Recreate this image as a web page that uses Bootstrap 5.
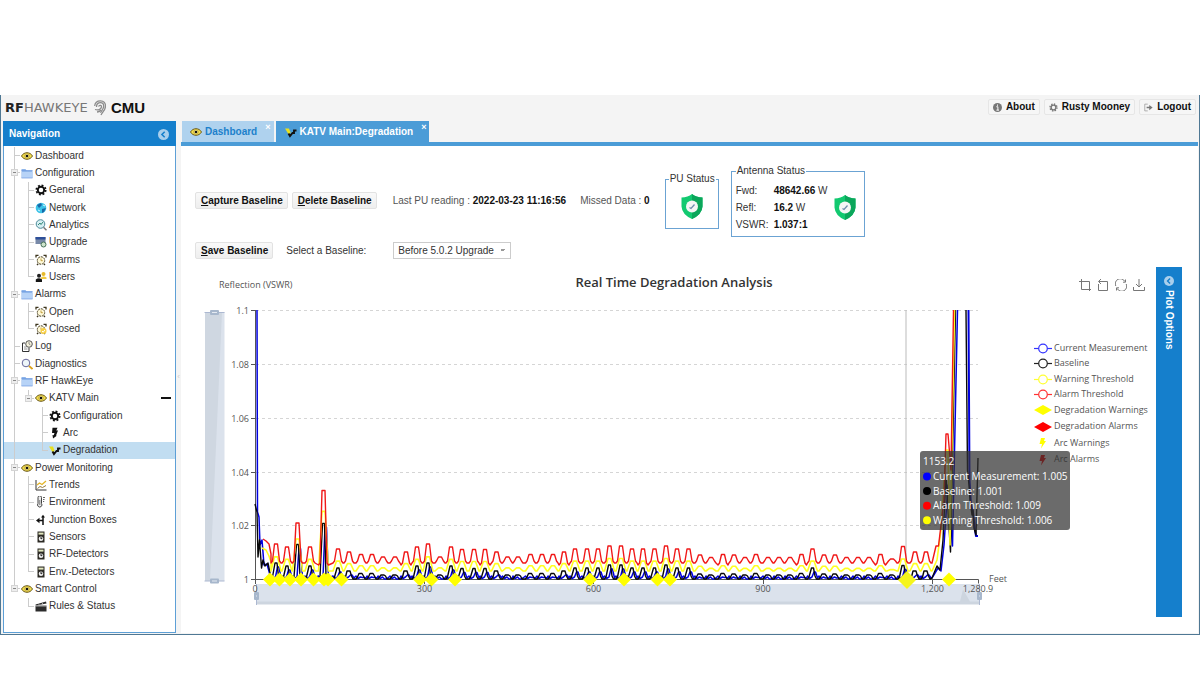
<!DOCTYPE html>
<html lang="en">
<head>
<meta charset="utf-8">
<meta name="viewport" content="width=device-width, initial-scale=1">
<title>RFHawkeye CMU</title>
<link href="https://cdn.jsdelivr.net/npm/bootstrap@5.3.0/dist/css/bootstrap.min.css" rel="stylesheet">
<style>
  body { font: 10px/16px "Liberation Sans", Arial, sans-serif; color: #333; background: #fff; padding: 95px 0 39px; }
  a { text-decoration: none; color: inherit; }
  .frame { border: 1px solid #4f7894; border-top: 0; background: #f4f4f4; padding: 0 1px 1px 2px; }
  .topbar { height: 26px; padding: 0 2px; }
  .logo-word { font: 13px/26px "DejaVu Sans", sans-serif; color: #777; width: 89px; }
  .logo-word b { color: #222; }
  .swirl { margin-right: 5px; }
  .product { font-size: 15px; color: #111; }
  .tool { display: flex; align-items: center; border: 1px solid #e6e6e6; background: #f6f6f6; color: #111; font-weight: bold; font-size: 10px; line-height: 14px; border-radius: 2px; padding: 0 4px; gap: 4px; }
  .tool svg { width: 9px; height: 9px; }

  .sidebar { width: 173px; flex: none; background: #fff; border: 1px solid #5d9fd6; }
  .sidebar-head { background: #157fcc; color: #fff; height: 25px; margin: -1px -1px 0; padding: 0 8px 0 6px; }
  .round-btn { width: 10px; height: 10px; border: 0; padding: 0; background: none; display: block; }
  .round-btn svg { display: block; }
  .tree { display: grid; grid-auto-rows: 1fr; min-height: 468px; margin: 1px 0 17px; }
  .node { display: flex; align-items: center; height: 100%; padding-left: 3px; color: #333; line-height: 12px; }
  .node.active { background: #c1ddf1; }
  .node svg { width: 12px; height: 12px; margin-right: 2px; flex: none; }
  .g { width: 14px; align-self: stretch; flex: none;
       --v: linear-gradient(#ccc,#ccc) 7px 0/1px 100% no-repeat;
       --h: linear-gradient(#ccc,#ccc) 7px 50%/6px 1px no-repeat; }
  .g.v { background: var(--v); }
  .g.t, .g.x { background: var(--v), var(--h); }
  .g.l, .g.y { background: linear-gradient(#ccc,#ccc) 7px 0/1px 50% no-repeat, var(--h); }
  .g.x, .g.y { display: flex; align-items: center; }
  .g.x::before, .g.y::before { content: ""; width: 7px; height: 7px; margin-left: 4px; border: 1px solid #d4d4d4; background: linear-gradient(#888,#888) 50% 50%/3px 1px no-repeat #eee; }
  .dash { width: 10px; height: 2px; background: #111; margin-right: 4px; }

  .splitter { width: 5px; flex: none; color: #ccc; font-size: 8px; }
  .doc-tabs { height: 25px; border-bottom: 4px solid #4b9cd7; gap: 2px; }
  .doc-tab { background: #afd2ee; color: #1c80cb; font-weight: bold; padding: 0 3px 0 8px; height: 21px; margin-left: 1px; line-height: 21px; }
  .doc-tab + .doc-tab { background: #4b9cd7; color: #fff; margin-left: 0; padding-left: 9px; }
  .doc-tab svg { width: 12px; height: 12px; margin-right: 3px; }
  .tab-close { border: 0; background: none; color: #fff; font: bold 9px/9px "Liberation Sans", sans-serif; padding: 2px 0 0; align-self: flex-start; }
  .pane { background: #fff; }

  .form-area { padding: 23px 14px 0; }
  .push-btn { border: 1px solid #e2e2e2; background: linear-gradient(#f9f9f9,#eee); color: #111; font-weight: bold; font-size: 10px; line-height: 15px; padding: 0 4px 0 5px; border-radius: 2px; }
  .line-a { height: 67px; }
  .line-a .read { margin-left: 14px; color: #555; }
  .line-b { margin: 6px 0 8px; height: 17px; }
  .line-b label { width: 107px; margin-left: 13px; }
  .status { border: 1px solid #6ba3d3; padding: 0 4px; color: #333; flex: none; }
  .status legend { float: none; width: auto; font-size: 10px; line-height: 14px; margin: 0; padding: 0 1px; color: #333; white-space: nowrap; }
  .pu { width: 54px; height: 57px; margin: 3px 12px 0 15px; padding: 0 3px; }
  .ant { width: 134px; height: 73px; margin-top: -5px; }
  .ant dl { display: grid; grid-template-columns: 38px auto; grid-auto-rows: 17px; line-height: 17px; margin: 4px 0 0; }
  .ant dt { font-weight: normal; }
  .ant dd { margin: 0; }
  .ant dd b, .read b { color: #111; }
  .baseline-select { appearance: none; width: 118px; height: 17px; border: 1px solid #ccc; border-radius: 0; padding: 0 4px; font-size: 10px; color: #333;
     background: linear-gradient(45deg,transparent 50%,#999 50%) 106px 6px/3px 3px no-repeat, linear-gradient(-45deg,transparent 50%,#999 50%) 109px 6px/3px 3px no-repeat, #fff; }
  .chart-area { min-width: 0; }
  #chart { display: block; width: 100%; font-family: "Open Sans", sans-serif; }
  .toolbox { position: absolute; right: 6px; top: 12px; gap: 6px; }
  .toolbox button { border: 0; background: none; padding: 0; line-height: 0; }
  .options { width: 26px; flex: none; background: #157fcc; margin: 0 16px 0 5px; padding-top: 9px; }
  .options span { writing-mode: vertical-rl; color: #fff; font-weight: bold; line-height: 12px; }
</style>
</head>
<body>
<svg width="0" height="0" class="position-absolute" aria-hidden="true">
  <symbol id="eye" viewBox="0 0 12 12"><path d="M.5 6C3 1.600 9 1.600 11.500 6 9 10.400 3 10.400.5 6z" fill="#f5e04e" stroke="#6b5a1d"/><circle cx="6" cy="6" r="2.300" fill="#fff08a" stroke="#a58a20" stroke-width=".6"/><circle cx="6" cy="6" r="1.300" fill="#111"/></symbol>
  <symbol id="folder" viewBox="0 0 12 12"><path d="M.5 2h4l1 1.500h6V11H.5z" fill="#8fb6ea"/><path d="M1 5h10.500v6H1z" fill="#b7d3f7"/><path d="M.5 3.500h11M.5 11h11" stroke="#6d9ae0" stroke-width=".7"/></symbol>
  <symbol id="gear" viewBox="0 0 12 12"><circle cx="6" cy="6" r="3.200" fill="none" stroke="currentColor" stroke-width="1.900"/><circle cx="6" cy="6" r="4.700" fill="none" stroke="currentColor" stroke-width="1.700" stroke-dasharray="1.900 1.790"/></symbol>
  <symbol id="globe" viewBox="0 0 12 12"><circle cx="6" cy="6" r="5.300" fill="#3cc3e8"/><path d="M2 3l4-2 1 2-3 3zM7 7l4-1-2 4-2 1z" fill="#1868a8"/><path d="M3 8l2 1M8 3l2 1" stroke="#d8f6ff"/></symbol>
  <symbol id="mag" viewBox="0 0 12 12"><circle cx="5" cy="5" r="3.800" fill="#eef6fa" stroke="#669"/><path d="M8 8l3.500 3" stroke="#dba21c" stroke-width="1.800"/></symbol>
  <symbol id="ana" viewBox="0 0 12 12"><circle cx="5.500" cy="5" r="4.300" fill="#d6eef2" stroke="#4d8a99"/><path d="M3 6l2-2 1 1.500L8 3" fill="none" stroke="#387"/><path d="M8.500 8.200l3 3" stroke="#777" stroke-width="1.500"/></symbol>
  <symbol id="upg" viewBox="0 0 12 12"><path d="M.5 1h10v7H.5z" fill="#7889a8"/><path d="M.5 1h10v2.500H.5z" fill="#2d4f99"/><circle cx="8.500" cy="8.500" r="2.500" fill="#cfe4cc" stroke="#48735a"/></symbol>
  <symbol id="alarm" viewBox="0 0 12 12"><circle cx="6" cy="6.500" r="3.700" fill="#fff9d8" stroke="#443a1d" stroke-dasharray="2 .8"/><path d="M6 4.500v2.200h1.800" fill="none" stroke="#b48a20" stroke-width=".8"/><path d="M1 3.500V1.300h2.500M8.500 1.300H11v2.200M2 11l1.200-1.200M10 11L8.800 9.800" fill="none" stroke="#3c341c" stroke-width="1.300"/></symbol>
  <symbol id="alarmc" viewBox="0 0 12 12"><use href="#alarm"/><circle cx="8.500" cy="8" r="3" fill="#f8cf45"/><path d="M7 8l1.200 1.200L10 7" fill="none" stroke="#fff"/></symbol>
  <symbol id="users" viewBox="0 0 12 12"><circle cx="8.500" cy="3" r="2" fill="#e7ba2b"/><path d="M6 10V6.500q2.500-2 5.500 0V8H7z" fill="#f2cb40"/><circle cx="4" cy="4.800" r="2" fill="#222"/><path d="M.8 11V8.500q3-2.500 6.200 0V11z" fill="#151515"/></symbol>
  <symbol id="logi" viewBox="0 0 12 12"><path d="M4 3H1.500v8.500H8V8" fill="none" stroke="#333"/><circle cx="8" cy="4" r="3.300" fill="#f4f1dc" stroke="#555"/><path d="M8 2v2l1.500 1M3 7h2.500M3 9h3.500" fill="none" stroke="#777" stroke-width=".8"/></symbol>
  <symbol id="bolt" viewBox="0 0 12 12"><path d="M3.500.7h5L7.300 3.500H9l-2 5 .8.3L4 11.500 3.500 8l1.200.3L5.500 6H3z" fill="currentColor"/></symbol>
  <symbol id="degr" viewBox="0 0 12 12"><path d="M0 2.500h4l1.500 4L4 9z" fill="#e8e020"/><path d="M3.500 7.500L5 10l2.500-3H9V4.500h2.500" fill="none" stroke="#111" stroke-width="1.900"/></symbol>
  <symbol id="trend" viewBox="0 0 12 12"><path d="M1 1v10h10.500" fill="none" stroke="#333"/><path d="M2 6l2.500-2L7 5.500 11 2" fill="none" stroke="#e3b528" stroke-width="1.300"/><path d="M2.500 9.500L5 7.500l2.500 1 3.500-2" fill="none" stroke="#977b3a"/></symbol>
  <symbol id="therm" viewBox="0 0 12 12"><path d="M3 1.500v6a2.200 2.200 0 1 0 3.500 0v-6a1.700 1.700 0 0 0-3.500 0z" fill="#eee" stroke="#444"/><path d="M4.800 4v5" stroke="#777"/><path d="M8 1.500h2M8 3.500h1.500M8 5.500h1.200" stroke="#666"/></symbol>
  <symbol id="junc" viewBox="0 0 12 12"><path d="M8 11V2M8 6.500H3" stroke="#111" stroke-width="1.500"/><path d="M6 3.500L8 .8l2 2.700zM4.500 3.800v5.400L1 6.500z" fill="#111"/></symbol>
  <symbol id="sens" viewBox="0 0 12 12"><path d="M2.500.5h7v11h-7z" fill="#2c2a24"/><path d="M3.500 1.600h5v2h-5z" fill="#e3e8c0"/><circle cx="6" cy="7.800" r="2.300" fill="#f1f1f1"/><path d="M6 6v2l1.500-1" stroke="#222" fill="none"/></symbol>
  <symbol id="clap" viewBox="0 0 12 12"><path d="M.5 5.500h11v6H.5z" fill="#2b2b2b"/><path d="M.5 4.600L11 1.500l.5 2L1 5.500z" fill="#2b2b2b"/><path d="M3 3.500l1.500 1.300M6.500 2.600L8 4M.5 6h11" stroke="#ddd" stroke-width=".7"/></symbol>
  <symbol id="left" viewBox="0 0 12 12"><circle cx="6" cy="6" r="6" fill="#a9cfec"/><path d="M7.300 3L4.300 6l3 3" fill="none" stroke="#157fcc" stroke-width="1.700"/></symbol>
  <symbol id="shield" viewBox="0 0 22 25"><path d="M11 0q4 3.300 10.500 3.500v9Q21 20.500 11 25 1 20.500.5 12.500v-9Q7 3.300 11 0z" fill="#12c970"/><path d="M11 0q4 3.300 10.500 3.500v9Q21 20.500 11 25z" fill="#0ba65b"/><circle cx="11" cy="12.500" r="6" fill="#f4f6f5"/><path d="M8.500 13.500l1.500 1 3.500-4" fill="none" stroke="#6c8bac" stroke-width="1.300"/></symbol>
</svg>

<div class="frame">
  <header class="topbar d-flex align-items-center">
    <span class="logo-word"><b>RF</b>HAWKEYE</span>
    <svg width="12" height="16" viewBox="0 0 12 16" class="swirl" aria-hidden="true"><g fill="none" stroke="#8b8b8b" stroke-width="1.300"><path d="M.7 6C1 2 4 .8 6.500.8c3.500 0 5 2.700 5 5.200 0 4-3 6-4.500 9"/><path d="M2.500 7c0-3 2-4.300 4-4.300s3.200 1.600 3.200 3.500c0 3-2.200 4-3.200 6.500"/><path d="M1 9.500c3 1 6 0 6.500-2.500.3-1.500-2-2.500-3-.5"/><path d="M3 12c1.500 0 3-.8 4-2"/></g></svg>
    <strong class="product">CMU</strong>
    <nav class="ms-auto d-flex gap-1 align-self-start pt-1">
      <button type="button" class="tool"><svg viewBox="0 0 12 12"><circle cx="6" cy="6" r="6" fill="#777"/><path d="M4.500 5h2v4.500M4.500 9.500h3.500M6 2v1.700" fill="none" stroke="#fff" stroke-width="1.300"/></svg>About</button>
      <button type="button" class="tool"><svg color="#777"><use href="#gear"/></svg>Rusty Mooney</button>
      <button type="button" class="tool"><svg viewBox="0 0 12 12"><path d="M5 1.500H1v9h4" fill="none" stroke="#999"/><path d="M3.500 6H8" stroke="#777" stroke-width="2"/><path d="M7 2.500L11.500 6 7 9.500z" fill="#777"/></svg>Logout</button>
    </nav>
  </header>

  <div class="d-flex">
    <aside class="sidebar">
      <div class="sidebar-head d-flex align-items-center justify-content-between"><b>Navigation</b>
        <button type="button" class="round-btn" aria-label="Collapse navigation"><svg width="11" height="11"><use href="#left"/></svg></button></div>
      <ul class="tree list-unstyled">
        <li><a href="#" class="node"><i class="g t"></i><svg><use href="#eye"/></svg>Dashboard</a></li>
        <li><a href="#" class="node"><i class="g x"></i><svg><use href="#folder"/></svg>Configuration</a></li>
        <li><a href="#" class="node"><i class="g v"></i><i class="g t"></i><svg color="#111"><use href="#gear"/></svg>General</a></li>
        <li><a href="#" class="node"><i class="g v"></i><i class="g t"></i><svg><use href="#globe"/></svg>Network</a></li>
        <li><a href="#" class="node"><i class="g v"></i><i class="g t"></i><svg><use href="#ana"/></svg>Analytics</a></li>
        <li><a href="#" class="node"><i class="g v"></i><i class="g t"></i><svg><use href="#upg"/></svg>Upgrade</a></li>
        <li><a href="#" class="node"><i class="g v"></i><i class="g t"></i><svg><use href="#alarm"/></svg>Alarms</a></li>
        <li><a href="#" class="node"><i class="g v"></i><i class="g l"></i><svg><use href="#users"/></svg>Users</a></li>
        <li><a href="#" class="node"><i class="g x"></i><svg><use href="#folder"/></svg>Alarms</a></li>
        <li><a href="#" class="node"><i class="g v"></i><i class="g t"></i><svg><use href="#alarm"/></svg>Open</a></li>
        <li><a href="#" class="node"><i class="g v"></i><i class="g l"></i><svg><use href="#alarmc"/></svg>Closed</a></li>
        <li><a href="#" class="node"><i class="g t"></i><svg><use href="#logi"/></svg>Log</a></li>
        <li><a href="#" class="node"><i class="g t"></i><svg><use href="#mag"/></svg>Diagnostics</a></li>
        <li><a href="#" class="node"><i class="g x"></i><svg><use href="#folder"/></svg>RF HawkEye</a></li>
        <li><a href="#" class="node"><i class="g v"></i><i class="g y"></i><svg><use href="#eye"/></svg>KATV Main<span class="dash ms-auto"></span></a></li>
        <li><a href="#" class="node"><i class="g v"></i><i class="g"></i><i class="g t"></i><svg color="#111"><use href="#gear"/></svg>Configuration</a></li>
        <li><a href="#" class="node"><i class="g v"></i><i class="g"></i><i class="g t"></i><svg color="#111"><use href="#bolt"/></svg>Arc</a></li>
        <li><a href="#" class="node active"><i class="g v"></i><i class="g"></i><i class="g l"></i><svg><use href="#degr"/></svg>Degradation</a></li>
        <li><a href="#" class="node"><i class="g x"></i><svg><use href="#eye"/></svg>Power Monitoring</a></li>
        <li><a href="#" class="node"><i class="g v"></i><i class="g t"></i><svg><use href="#trend"/></svg>Trends</a></li>
        <li><a href="#" class="node"><i class="g v"></i><i class="g t"></i><svg><use href="#therm"/></svg>Environment</a></li>
        <li><a href="#" class="node"><i class="g v"></i><i class="g t"></i><svg><use href="#junc"/></svg>Junction Boxes</a></li>
        <li><a href="#" class="node"><i class="g v"></i><i class="g t"></i><svg><use href="#sens"/></svg>Sensors</a></li>
        <li><a href="#" class="node"><i class="g v"></i><i class="g t"></i><svg><use href="#sens"/></svg>RF-Detectors</a></li>
        <li><a href="#" class="node"><i class="g v"></i><i class="g l"></i><svg><use href="#sens"/></svg>Env.-Detectors</a></li>
        <li><a href="#" class="node"><i class="g y"></i><svg><use href="#eye"/></svg>Smart Control</a></li>
        <li><a href="#" class="node"><i class="g"></i><i class="g l"></i><svg><use href="#clap"/></svg>Rules &amp; Status</a></li>
      </ul>
    </aside>
    <div class="splitter d-flex align-items-center justify-content-center">‹</div>

    <main class="flex-grow-1 d-flex flex-column chart-area">
      <div class="doc-tabs d-flex">
        <div class="doc-tab d-flex align-items-center"><svg><use href="#eye"/></svg><a href="#">Dashboard</a><button type="button" class="tab-close ms-2" aria-label="Close Dashboard">×</button></div>
        <div class="doc-tab d-flex align-items-center"><svg><use href="#degr"/></svg><a href="#">KATV Main:Degradation</a><button type="button" class="tab-close ms-2" aria-label="Close Degradation">×</button></div>
      </div>
      <div class="pane flex-grow-1">
        <form class="form-area">
          <div class="line-a d-flex">
            <div class="d-flex align-items-center flex-shrink-0 pb-1">
              <button type="button" class="push-btn"><u>C</u>apture Baseline</button>
              <button type="button" class="push-btn ms-1"><u>D</u>elete Baseline</button>
              <span class="read ms-3">Last PU reading : <b>2022-03-23 11:16:56</b></span>
              <span class="read">Missed Data : <b>0</b></span>
            </div>
            <fieldset class="status pu align-self-start"><legend>PU Status</legend>
              <svg width="22" height="25" class="d-block mx-auto mt-2"><use href="#shield"/></svg></fieldset>
            <fieldset class="status ant"><legend>Antenna Status</legend>
              <div class="d-flex"><dl><dt>Fwd:</dt><dd><b>48642.66</b> W</dd><dt>Refl:</dt><dd><b>16.2</b> W</dd><dt>VSWR:</dt><dd><b>1.037:1</b></dd></dl>
              <svg width="22" height="25" class="ms-auto align-self-center me-1 mt-1"><use href="#shield"/></svg></div></fieldset>
          </div>
          <div class="line-b d-flex align-items-center">
            <button type="button" class="push-btn"><u>S</u>ave Baseline</button>
            <label for="baseline">Select a Baseline:</label>
            <select id="baseline" class="baseline-select"><option>Before 5.0.2 Upgrade</option></select>
          </div>
        </form>
        <div class="d-flex">
          <div class="chart-area flex-grow-1 position-relative">
            <svg id="chart" viewBox="181 267 970 350" role="img" aria-label="Real Time Degradation Analysis"></svg>
            <div class="toolbox d-flex">
              <button type="button" aria-label="Zoom"><svg width="12" height="12" fill="none" stroke="#777"><path d="M2.500 0v10.500H12M0 2.500h10.500V12"/></svg></button>
              <button type="button" aria-label="Zoom reset"><svg width="12" height="12" fill="none" stroke="#777"><path d="M1.500 5v6.500h9v-9H2M4 0L1.500 2.500 4 5"/></svg></button>
              <button type="button" aria-label="Restore"><svg width="12" height="12" fill="none" stroke="#777"><path d="M.8 7a5 5 0 0 1 9-4.500M11.200 5a5 5 0 0 1-9 4.500M10.500.5v2.700H8M1.500 11.500V8.800H4"/></svg></button>
              <button type="button" aria-label="Save as image"><svg width="12" height="12" fill="none" stroke="#777"><path d="M6 0v8M3 5l3 3 3-3M.5 8v3.500h11V8"/></svg></button>
            </div>
          </div>
          <div class="options d-flex flex-column align-items-center">
            <button type="button" class="round-btn mb-1" aria-label="Expand plot options"><svg width="10" height="10"><use href="#left"/></svg></button>
            <span>Plot Options</span>
          </div>
        </div>
      </div>
    </main>
  </div>
</div>

<script src="https://cdn.jsdelivr.net/npm/bootstrap@5.3.0/dist/js/bootstrap.bundle.min.js"></script>
<script>
// Position of the crest of every ripple and the height of its alarm threshold.
const peaks = [[276,544],[287,547],[297.5,523],[310,547],[323.5,490.5],[338,549],[349,552],[361,554.5],[372,554.5],[383,557],[395,557],[406,552],[417,547],[428,544],[440,557],[451,547],[462,549.5],[474,549.5],[485,549.5],[496.5,552],[507.5,557],[518,557],[530.5,554.5],[542,554.5],[553,554.5],[564,552],[575,549],[587,549],[598,549],[609.5,546],[621,546],[632,549],[643,549],[654.5,549],[666,546],[677,549],[688.5,549],[700,555],[711,557.5],[723,554.5],[734,555],[745,557.5],[756,554.5],[768,557.5],[779,557.5],[790,557.5],[801.5,554.5],[812.5,549],[824,555],[835,555],[846.5,557.5],[858,557.5],[869,557.5],[880.5,554.5],[892,559],[903,546.5],[915,552],[926,552]];
const alarm = [[263,539],[266,541],[269,544],[271,554]], warn = [[262,548],[266,550],[269,556],[271,562]];
const base = [[255,504],[257,512],[258,557],[259.5,540],[261.5,568],[263,560],[265,566],[268,563],[270,573]];
const cur = [[257,310],[257.5,512],[259,517],[260,545],[262,540],[264,565],[267,564],[270,575]];
peaks.forEach(([x,y], i) => {
  const low = 563 + (i % 7 === 4 ? 2 : 0), wy = y + (563 - y) * .15 + 9;
  const by = Math.min(575, y + 19 + Math.max(0, (530 - y) * .35)), wide = y > 551 ? 1 : 0;
  alarm.push([x-5,low],[x-3.5,low-2],[x-1.5,y],[x+1.5,y],[x+3.5,low-2],[x+5,low]);
  warn.push([x-5,571],[x-1.5,wy+1],[x+1.5,wy+1],[x+5,571]);
  base.push([x-5,579],[x-3.5,577],[x-1-wide,by],[x+1,by],[x+2.5,576],[x+4,579]);
  cur.push([x-5,576],[x-3,578.5],[x-.5,577],[x+1.5,by+4],[x+3,by+4],[x+5,578]);
});
alarm.push([932,563],[936,546],[938.5,546],[944,500],[946,434],[948,434],[951,470],[953.5,310]);
warn.push([932,571],[937,560],[941,530],[946,450],[948,450],[950,545],[954.5,310]);
base.push([932,578],[937,566],[940,570],[943,540],[946,475],[950.5,552],[955.5,310]);
cur.push([932,578],[938,568],[941,571],[944,545],[948,485],[952.5,546],[957.5,310]);
const baseTail = [[966,310],[967.5,470],[969,485],[970,500],[972,515],[973,510],[974,528],[976,535],[978,458]];
const curTail = [[968.5,310],[969.5,480],[971,505],[973,512],[975,530],[976,536],[978,536]];
const line = (p, c, w = 1.4) => `<polyline points="${p.map(q => q.join()).join(' ')}" fill="none" stroke="${c}" stroke-width="${w}" stroke-linejoin="round"/>`;
const text = (x, y, s, size = 9, fill = '#555', extra = '') => `<text x="${x}" y="${y}" font-size="${size}" fill="${fill}" ${extra}>${s}</text>`;
const diamond = (x, y, w, h, c) => `<path d="M${x-w} ${y}L${x} ${y-h}L${x+w} ${y}L${x} ${y+h}z" fill="${c}"/>`;
const end = 'text-anchor="end"', mid = 'text-anchor="middle"';
let s = text(674, 287, 'Real Time Degradation Analysis', 13, '#333', mid + ' font-weight="600"') + text(219, 288, 'Reflection (VSWR)');

// data zoom sliders
s += '<path d="M205 312h19.500v269H205z" fill="#dbe2ec"/><path d="M205 312h17l-12 269h-5z" fill="#cfd7e1"/><path d="M204.500 312.500h20M204.500 581h20" stroke="#acb8d1"/>';
s += '<path d="M256 584h723v20H256z" fill="#dbe2ec"/><path d="M256 601.500h704l3-12 7 12h9V604.500H256z" fill="#cdd5df"/><path d="M256.500 584v21M979.500 584v21" stroke="#acb8d1"/>';
for (const [x, y, w, h] of [[210,310,9,5],[210,578.5,9,5],[254,592,5,8],[977,592,5,8]]) s += `<rect x="${x}" y="${y}" width="${w}" height="${h}" rx="1" fill="#a7b7cc"/><path d="M${x+2} ${y+h/2}h${w-4}" stroke="#e4eaf2"/>`;

// axes
[[310.5,'1.1'],[364.5,'1.08'],[418.5,'1.06'],[472.5,'1.04'],[525.5,'1.02'],[579.5,'1']].forEach(([y,t]) => {
  s += `<path d="M251 ${y}h5" stroke="#555"/>` + text(249, y + 3, t, 9, '#555', end);
  if (y < 579) s += `<path d="M256 ${y}h722" stroke="#d5d5d5" stroke-dasharray="3 3"/>`;
});
s += '<path d="M255.500 310v270M255 579.500h723.500v4M424.500 580v4M593.500 580v4M763.500 580v4M932.500 580v4M255.500 580v4" fill="none" stroke="#555"/><path d="M906 310v269" stroke="#bbb"/>';

s += line(cur,'#0000e0',1.5) + line(curTail,'#0000e0',2) + line(base,'#080808') + line(baseTail,'#080808') + line(warn,'#ffff20',1.6) + line(alarm,'#f01818');
for (const x of [270,279.5,290,301,313.5,324,328,341.5,420,431.5,455,590,624,657.5,670,949]) s += diamond(x, 579.5, 7, 7, '#ff0');
s += diamond(907, 580, 9, 9, '#f5f51c');
[[255,'0'],[424.5,'300'],[593.5,'600'],[763,'900'],[932.5,'1,200'],[978,'1,280.9']].forEach(([x,t]) => s += text(x, 592, t, 9, '#555', mid));
s += text(989, 582, 'Feet');

// legend
[['Current Measurement','#33f',348.5],['Baseline','#222',363.5],['Warning Threshold','#ff3',379.5],['Alarm Threshold','#f33',394.5]].forEach(([t,c,y]) =>
  s += `<path d="M1034 ${y}h18" stroke="${c}" stroke-width="1.200"/><circle cx="1043" cy="${y}" r="4.300" fill="#fff" stroke="${c}" stroke-width="1.200"/>` + text(1054, y + 2.5, t));
s += diamond(1043,410,9,5,'#ff0') + text(1054,413,'Degradation Warnings') + diamond(1043,427,9,5,'#f00') + text(1054,429,'Degradation Alarms');
const bolt = (y, c) => `<path d="M1041 ${y-5}h4l-1 3h2l-5 7.500 1-4.500h-2.500z" fill="${c}"/>`;
s += bolt(443,'#ff0') + text(1054,446,'Arc Warnings') + bolt(460,'#f00') + text(1054,462,'Arc Alarms');

// tooltip
s += '<rect x="920" y="451" width="150" height="79" rx="3" fill="#323232" fill-opacity=".72"/>' + text(923,465,'1153.2',10,'#fff');
[['Current Measurement: 1.005','#00f'],['Baseline: 1.001','#000'],['Alarm Threshold: 1.009','#f00'],['Warning Threshold: 1.006','#ff0']].forEach(([t,c],i) =>
  s += `<circle cx="927" cy="${476.5 + i*14.6}" r="4" fill="${c}"/>` + text(933, Math.round(480 + i*14.6), t, 10, '#fff'));
document.getElementById('chart').innerHTML = s;
</script>
</body>
</html>
